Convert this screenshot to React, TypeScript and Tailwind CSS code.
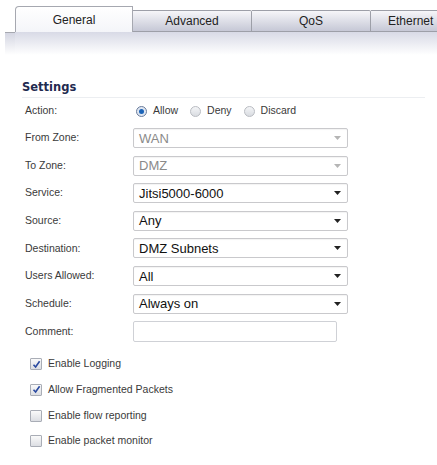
import React from 'react';

type Field = { label: string; value: string; disabled?: boolean };

const fields: Field[] = [
    { label: 'From Zone:', value: 'WAN', disabled: true },
    { label: 'To Zone:', value: 'DMZ', disabled: true },
    { label: 'Service:', value: 'Jitsi5000-6000' },
    { label: 'Source:', value: 'Any' },
    { label: 'Destination:', value: 'DMZ Subnets' },
    { label: 'Users Allowed:', value: 'All' },
    { label: 'Schedule:', value: 'Always on' },
];

const options = [
    { label: 'Enable Logging', checked: true },
    { label: 'Allow Fragmented Packets', checked: true },
    { label: 'Enable flow reporting', checked: false },
    { label: 'Enable packet monitor', checked: false },
];

const labelFont = { fontFamily: '"Liberation Sans", Arial, sans-serif' };

function Radio({ checked, label }: { checked?: boolean; label: string }) {
    return (
        <div className="flex items-center">
            <span
                className={`flex h-[11px] w-[11px] items-center justify-center rounded-full border ${
                    checked ? 'border-[#6b7d9c] bg-[#dfe6f1]' : 'border-[#b9bcc2] bg-gradient-to-b from-[#f4f5f7] to-[#d9dce1]'
                }`}
            >
                {checked && <span className="h-[5px] w-[5px] rounded-full bg-[#1b64b8]" />}
            </span>
            <span className="ml-[6px] text-[10.5px] text-[#3a3a3a]">{label}</span>
        </div>
    );
}

function Select({ value, disabled }: { value: string; disabled?: boolean }) {
    return (
        <div className="flex h-[20px] w-[215px] items-center justify-between rounded-[2px] border border-[#c9c9cc] bg-white pl-[5px] pr-[6px] shadow-[inset_0_1px_1px_rgba(0,0,0,0.05)]">
            <span
                className={`text-[13px] leading-none ${disabled ? 'text-[#8a8a8a]' : 'text-[#111]'}`}
                style={labelFont}
            >
                {value}
            </span>
            <svg width="7" height="4" viewBox="0 0 7 4">
                <path d="M0 0 L7 0 L3.5 4 Z" fill={disabled ? '#b5b5b5' : '#222'} />
            </svg>
        </div>
    );
}

function Checkbox({ checked }: { checked: boolean }) {
    return (
        <span className="flex h-[12px] w-[12px] items-center justify-center rounded-[1px] border border-[#a9adb6] bg-gradient-to-b from-[#fafafa] to-[#dcdee3]">
            {checked && (
                <svg width="9" height="9" viewBox="0 0 9 9">
                    <path d="M1.5 4.8 L3.6 7 L7.6 1.2" fill="none" stroke="#2a4aa0" strokeWidth="1.6" />
                </svg>
            )}
        </span>
    );
}

export default function App() {
    const tabs = ['Advanced', 'QoS'];

    return (
        <div className="h-[465px] w-[437px] overflow-hidden bg-white" style={labelFont}>
            {/* tab strip */}
            <div className="flex items-end pl-[15px] pt-[6px]">
                <div className="flex h-[26px] w-[118px] shrink-0 items-center justify-center rounded-tl-[4px] border border-b-0 border-[#a6a8b0] bg-gradient-to-b from-white to-[#f4f5f9] text-[12px] text-[#222]">
                    General
                </div>
                {tabs.map((t) => (
                    <div
                        key={t}
                        className="flex h-[22px] w-[119px] shrink-0 items-center justify-center rounded-tr-[2px] border border-l-0 border-[#9d9fa8] bg-gradient-to-b from-[#f6f6f9] to-[#c6c8d6] text-[12px] text-[#222]"
                    >
                        {t}
                    </div>
                ))}
                <div className="flex h-[22px] flex-1 items-center border-t border-b border-[#9d9fa8] bg-gradient-to-b from-[#f6f6f9] to-[#c6c8d6] pl-[17px] text-[12px] text-[#222]">
                    Ethernet
                </div>
            </div>
            <div className="ml-[5px] flex h-[23px]">
                <div className="h-full w-[10px] border-t border-[#a6a8b0] bg-gradient-to-b from-[#d4d6e2] to-white" />
                <div className="h-full flex-1 bg-gradient-to-b from-[#d8dae6] to-white" />
            </div>

            {/* settings */}
            <div className="mt-[24px] pl-[22px] pr-[12px]">
                <div className="border-b border-[#eceef1] pb-[1px] text-[11.5px] font-bold text-[#1f2b50]" style={{ fontFamily: '"DejaVu Sans", Tahoma, sans-serif' }}>
                    Settings
                </div>
                <div className="pl-[3px]">
                    <div className="flex h-[26px] items-center">
                        <span className="w-[111px] text-[10.5px] text-[#3a3a3a]">Action:</span>
                        <div className="flex items-center gap-[12px]">
                            <Radio checked label="Allow" />
                            <Radio label="Deny" />
                            <Radio label="Discard" />
                        </div>
                    </div>
                    {fields.map((f) => (
                        <div key={f.label} className="flex h-[27.6px] items-center">
                            <span className="w-[108px] text-[10.5px] text-[#3a3a3a]">{f.label}</span>
                            <Select value={f.value} disabled={f.disabled} />
                        </div>
                    ))}
                    <div className="flex h-[28px] items-center">
                        <span className="w-[108px] text-[10.5px] text-[#3a3a3a]">Comment:</span>
                        <div className="h-[21px] w-[204px] rounded-[2px] border border-[#cfd1d6] bg-white" />
                    </div>
                </div>
                <div className="mt-[6px] flex flex-col pl-[8px]">
                    {options.map((o) => (
                        <div key={o.label} className="flex h-[25.7px] items-center">
                            <Checkbox checked={o.checked} />
                            <span className="ml-[6px] text-[10.5px] text-[#3a3a3a]">{o.label}</span>
                        </div>
                    ))}
                </div>
            </div>
        </div>
    );
}
